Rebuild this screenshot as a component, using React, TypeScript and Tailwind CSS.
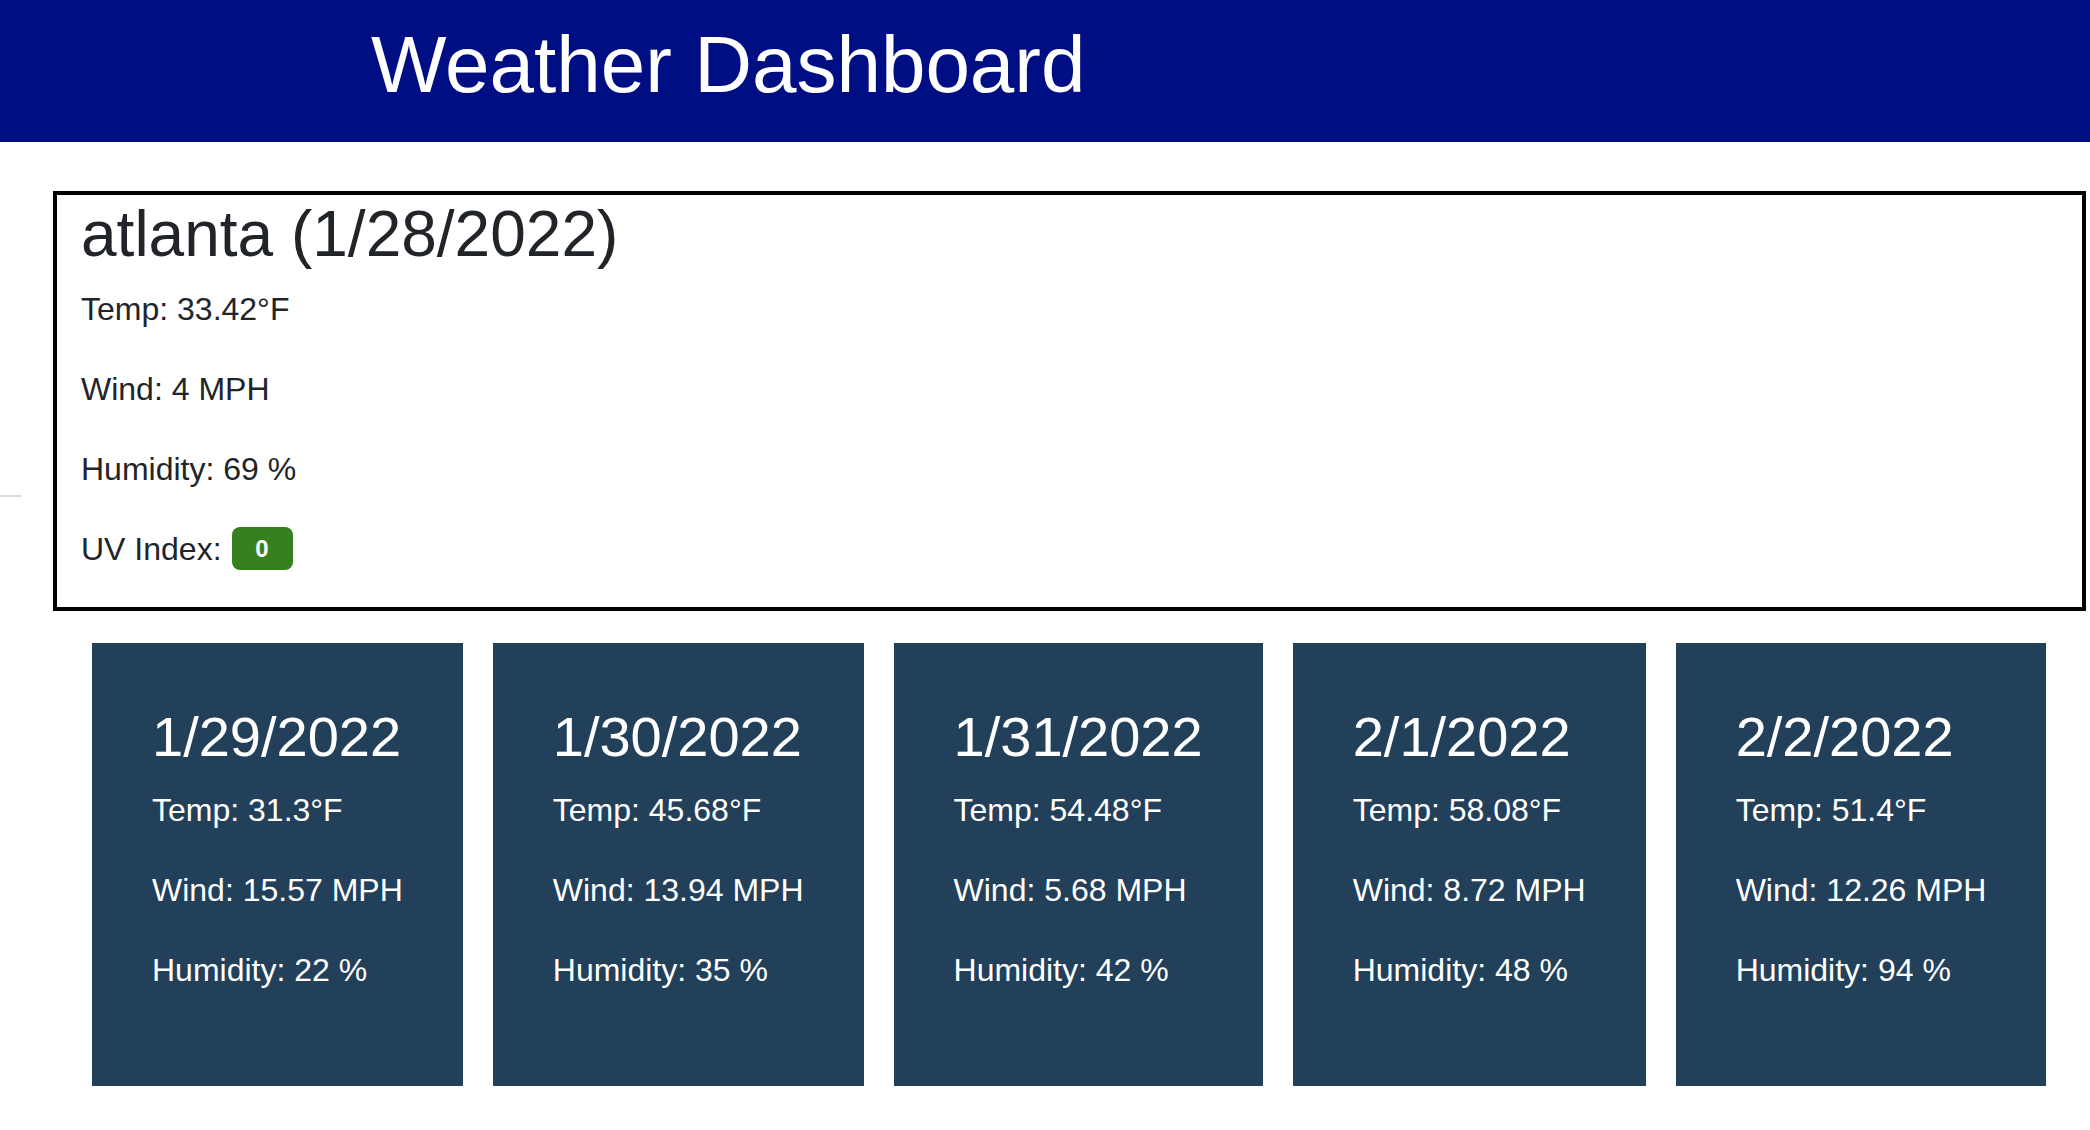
const current = {
  city: 'atlanta',
  date: '1/28/2022',
  temp: '33.42',
  wind: '4',
  humidity: '69',
  uv: '0',
};

const forecast = [
  { date: '1/29/2022', temp: '31.3', wind: '15.57', humidity: '22' },
  { date: '1/30/2022', temp: '45.68', wind: '13.94', humidity: '35' },
  { date: '1/31/2022', temp: '54.48', wind: '5.68', humidity: '42' },
  { date: '2/1/2022', temp: '58.08', wind: '8.72', humidity: '48' },
  { date: '2/2/2022', temp: '51.4', wind: '12.26', humidity: '94' },
];

function ForecastCard({ day }: { day: (typeof forecast)[number] }) {
  return (
    <div className="bg-[#22405a] text-white px-[60px] pt-[60px] pb-[28px]">
      <h3 className="text-[56px] leading-[1.2] mb-[16px] whitespace-nowrap">{day.date}</h3>
      <p className="text-[32px] leading-[48px] mb-[32px] whitespace-nowrap">Temp: {day.temp}°F</p>
      <p className="text-[32px] leading-[48px] mb-[32px] whitespace-nowrap">Wind: {day.wind} MPH</p>
      <p className="text-[32px] leading-[48px] mb-[32px] whitespace-nowrap">Humidity: {day.humidity} %</p>
      <div className="h-[32px]" />
    </div>
  );
}

export default function App() {
  return (
    <div className="min-h-screen bg-white font-['Liberation_Sans',Arial,sans-serif] text-[#212529]">
      <header className="h-[142px] bg-[#000e84] pt-[17px] pl-[371px]">
        <h1 className="text-[80px] leading-[1.2] text-white">Weather Dashboard</h1>
      </header>

      <main className="pt-[49px]">
        <div className="flex">
          <div className="w-[53px] shrink-0 pt-[304px]">
            <div className="w-[21px] border-t-2 border-[#d9d9d9]" />
          </div>
          <section className="flex-1 mr-[4px] border-[4px] border-black pl-[24px] pt-[1px]">
            <h2 className="text-[64px] leading-[1.2] mb-[12px]">
              {current.city} ({current.date})
            </h2>
            <p className="text-[32px] leading-[48px] mb-[32px]">Temp: {current.temp}°F</p>
            <p className="text-[32px] leading-[48px] mb-[32px]">Wind: {current.wind} MPH</p>
            <p className="text-[32px] leading-[48px] mb-[32px]">Humidity: {current.humidity} %</p>
            <p className="text-[32px] leading-[48px] mb-[34px] flex items-center">
              UV Index:
              <span className="ml-[10px] inline-flex items-center justify-center w-[61px] h-[43px] rounded-[8px] bg-[#36801f] text-white text-[24px] font-bold">
                {current.uv}
              </span>
            </p>
          </section>
        </div>

        <div className="flex gap-[30px] pl-[92px] pt-[32px]">
          {forecast.map((day) => (
            <ForecastCard key={day.date} day={day} />
          ))}
        </div>
      </main>
    </div>
  );
}
